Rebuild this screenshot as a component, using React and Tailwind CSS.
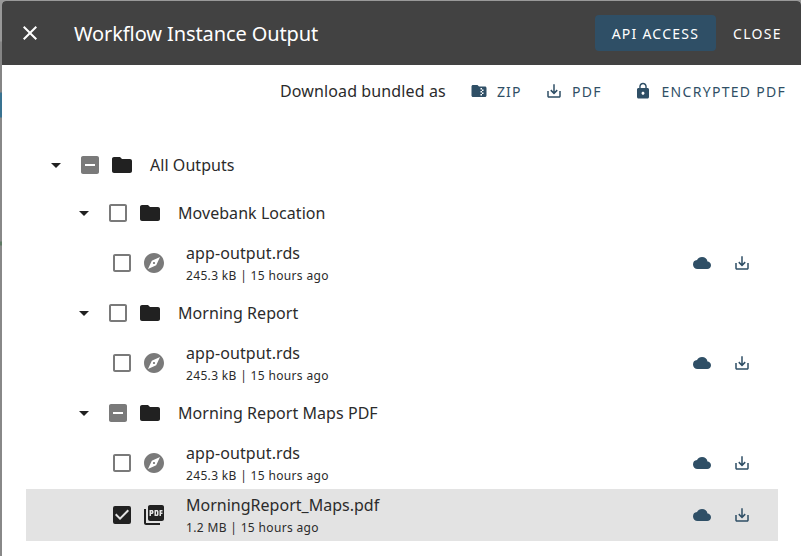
import {
  MdArrowDropDown,
  MdCheckBox,
  MdCheckBoxOutlineBlank,
  MdClose,
  MdCloud,
  MdExplore,
  MdFolder,
  MdFolderZip,
  MdIndeterminateCheckBox,
  MdLock,
  MdPictureAsPdf,
  MdSaveAlt,
} from 'react-icons/md';

const checkboxes = {
  some: <MdIndeterminateCheckBox className="size-6 text-[#7a7a7a]" />,
  none: <MdCheckBoxOutlineBlank className="size-6 text-[#7a7a7a]" />,
  all: <MdCheckBox className="size-6 text-[#212121]" />,
};

function FolderRow({ name, state, indent }) {
  return (
    <div className={`flex h-12 items-center ${indent}`}>
      <MdArrowDropDown className="mr-2.5 size-6 shrink-0" />
      {checkboxes[state]}
      <MdFolder className="ml-2 size-6" />
      <span className="ml-4 text-base tracking-[0.05px] text-[#2b2b2b]">{name}</span>
    </div>
  );
}

function FileRow({ name, meta, pdf }) {
  return (
    <div className={`flex h-[52px] items-center pl-[84px] pr-[27px] ${pdf ? 'bg-[#e3e3e3]' : ''}`}>
      {checkboxes[pdf ? 'all' : 'none']}
      {pdf ? <MdPictureAsPdf className="ml-2 size-6" /> : <MdExplore className="ml-2 size-6 text-[#7a7a7a]" />}
      <div className="ml-5 flex grow flex-col text-[#2b2b2b]">
        <span className={`text-base leading-6 ${pdf ? 'tracking-[0.01px]' : 'tracking-[0.1px]'}`}>{name}</span>
        <span className="pt-px text-xs leading-5 tracking-[0.34px]">{meta}</span>
      </div>
      <MdCloud className="size-[18px] text-[#2f4f66]" />
      <MdSaveAlt className="ml-[22px] size-[18px] text-[#2f4f66]" />
    </div>
  );
}

export default function App() {
  return (
    <div className="h-[556px] w-[801px] overflow-hidden bg-[linear-gradient(#999_0_41px,#858585_42px_92px,#397391_93px_117px,#888_118px_241px,#5f7a64_242px_245px,#888_246px_556px)] pl-[2px] pt-px font-['Noto_Sans',sans-serif] text-[#212121]">
      <div className="h-[555px] overflow-hidden rounded-t-[4px] bg-white">
        <header className="flex h-16 items-center bg-[#424242] text-white">
          <MdClose className="ml-4 size-6" />
          <h1 className="ml-8 grow pt-0.5 text-[20px] leading-8 tracking-[-0.1px]">Workflow Instance Output</h1>
          <button className="h-9 w-[121px] rounded bg-[#2f4f66] pt-0.5 text-sm tracking-[1.25px]">API ACCESS</button>
          <button className="ml-[17px] mr-[19px] pt-0.5 text-sm tracking-[1.35px]">CLOSE</button>
        </header>
        <div className="flex h-[52px] items-center pl-[278px] text-sm tracking-[1.25px] text-[#2f4f66]">
          <span className="w-[190px] text-base tracking-[0.12px] text-[#2b2b2b]">Download bundled as</span>
          <button className="flex w-[75px] items-center gap-[9px]">
            <MdFolderZip className="size-[18px]" />
            <span className="pt-0.5 tracking-[1.1px]">ZIP</span>
          </button>
          <button className="flex w-[89px] items-center gap-[9px]">
            <MdSaveAlt className="size-[18px]" />
            <span className="pt-0.5">PDF</span>
          </button>
          <button className="flex items-center gap-[9.5px] whitespace-nowrap">
            <MdLock className="size-[18px]" />
            <span className="pt-0.5 tracking-[1.3px]">ENCRYPTED PDF</span>
          </button>
        </div>
        <main className="ml-6 mr-[23px] mt-6">
          <FolderRow name="All Outputs" state="some" indent="pl-[18px]" />
          <FolderRow name="Movebank Location" state="none" indent="pl-[46px]" />
          <FileRow name="app-output.rds" meta="245.3 kB | 15 hours ago" />
          <FolderRow name="Morning Report" state="none" indent="pl-[46px]" />
          <FileRow name="app-output.rds" meta="245.3 kB | 15 hours ago" />
          <FolderRow name="Morning Report Maps PDF" state="some" indent="pl-[46px]" />
          <FileRow name="app-output.rds" meta="245.3 kB | 15 hours ago" />
          <FileRow name="MorningReport_Maps.pdf" meta="1.2 MB | 15 hours ago" pdf />
        </main>
      </div>
    </div>
  );
}
